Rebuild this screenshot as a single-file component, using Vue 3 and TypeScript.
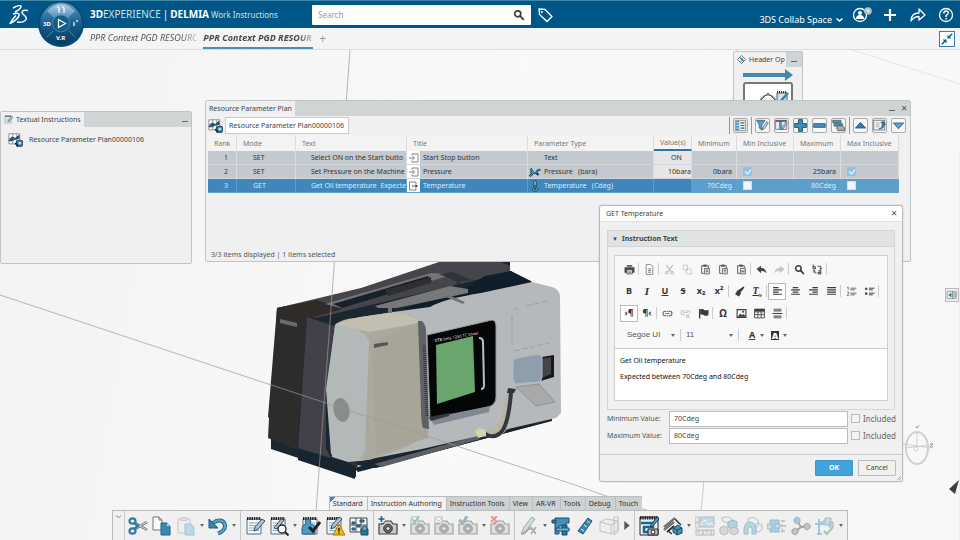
<script setup lang="ts">
import { ref } from 'vue'

interface Tool {
  kind: 'tool' | 'caret' | 'sep' | 'play'
  icon?: string
  label?: string
  dim?: boolean
}

interface Row {
  rank: number
  mode: string
  text: string
  dir: 'in' | 'out'
  title: string
  typeIcon: string
  type: string
  value: string
  min: string
  minInc: boolean | null
  max: string
  maxInc: boolean | null
}

const t = (icon: string, label: string, dim = false): Tool => ({ kind: 'tool', icon, label, dim })
const caret: Tool = { kind: 'caret' }
const sep: Tool = { kind: 'sep' }

const pad = '<path d="M2 3h14v15H2z" fill="#f4fafd" stroke="#666"/><path d="M2 2.5h14" stroke="#222" stroke-width="3" stroke-dasharray="1.4 .9"/><path d="M4 7h10M4 9.500h10M4 12h10M4 14.500h10" stroke="#7fb0cb" stroke-width="1"/>'
const cam = '<path d="M1 8h4l2-3h6l2 3h4v10H1z" fill="#c9cbcc" stroke="#3f4345" stroke-width="1.200"/><path d="M3 6h3v2H3z" fill="#555"/><circle cx="10" cy="12.500" r="4.300" fill="#6e7375" stroke="#2b2b2b"/><circle cx="10" cy="12.500" r="2" fill="#eee" stroke="#333"/>'

const art: Record<string, string> = {
  cut: '<path d="M7 7l12 7M7 13l12-7" stroke="#666" stroke-width="2.600"/><path d="M7 7l12 7M7 13l12-7" stroke="#e6e6e6" stroke-width="1"/><ellipse cx="4.500" cy="5" rx="3" ry="2.700" fill="none" stroke="#2f7ca3" stroke-width="2.200"/><ellipse cx="4.500" cy="15" rx="3" ry="2.700" fill="none" stroke="#2f7ca3" stroke-width="2.200"/><path d="M6 7l4 3-4 3" fill="none" stroke="#2f7ca3" stroke-width="2.400"/>',
  copy: '<path d="M1 1h6l3 3v10H1z" fill="#fafafa" stroke="#777"/><path d="M7 1v3h3" fill="none" stroke="#777"/><path d="M9 7h6l3 3v9H9z" fill="#3d88b0" stroke="#1d5f84"/><path d="M15 7v3h3z" fill="#b9dcee"/>',
  paste: '<path d="M2 3h12v14H2z" fill="#eee" stroke="#999"/><path d="M5 1.500h6v3H5z" fill="#ccc" stroke="#999"/><path d="M9 8h6l3 3v8H9z" fill="#7fbbd9" stroke="#4a90b5"/>',
  undo: '<path d="M5 7C11 2 17 5 17 10c0 4-3 6-7 7.500" fill="none" stroke="#1c5f86" stroke-width="4"/><path d="M5 7C11 2 17 5 17 10c0 4-3 6-7 7.500" fill="none" stroke="#5ca3c8" stroke-width="2.200"/><path d="M1 3v9h9z" fill="#3a86af" stroke="#1c5f86"/>',
  note: pad + '<path d="M9 15l1-4 7-8 3 2-7 8z" fill="#a9c3d2" stroke="#3c4f5b"/>',
  noteSearch: pad + '<path d="M5 12l7-9 3 1-7 9z" fill="#a9c3d2" stroke="#3c4f5b"/><circle cx="13" cy="13" r="4" fill="#fff" stroke="#222" stroke-width="1.300"/><path d="M16 16l3.500 3.500" stroke="#222" stroke-width="2"/>',
  noteCheck: pad + '<path d="M1 12q1-4 4-4l-1-3 3-2 3 2-1 3q5 0 5 5v5H1z" fill="#4d9ac3" stroke="#22688e"/><path d="M8 11l4 4 7-9" fill="none" stroke="#222" stroke-width="3"/>',
  noteWarn: pad + '<path d="M6 13l1-4 7-8 3 2-7 8z" fill="#a9c3d2" stroke="#3c4f5b"/><path d="M14 8l6 11H8z" fill="#f5b916" stroke="#a87400"/><path d="M14 12v3.500M14 16.500v1.300" stroke="#222" stroke-width="1.500"/>',
  plan: '<path d="M1 2h17v14H1z" fill="#f7f7f7" stroke="#444"/><path d="M7 2v14M12 2v14M1 9h17" stroke="#555"/><path d="M3 6h3v2H3zM11 4h4v2h-4zM3 12h3v2H3zM8 9h3v2H8z" fill="#4593bb" stroke="#174c6b"/><path d="M12 13h7v6h-7z" fill="#2d769f" stroke="#174c6b"/><circle cx="15.500" cy="12.500" r="2.500" fill="#5ca8cf" stroke="#174c6b"/>',
  camAdd: cam + '<path d="M3.500 0v7M0 3.500h7" stroke="#f1f1f1" stroke-width="4"/><path d="M3.500 0v6M.5 3h6" stroke="#14679b" stroke-width="1.600"/>',
  camOk: cam + '<path d="M1 1h7v6H1z" fill="#fff" stroke="#777"/><path d="M2 3l3 3 4-6" fill="none" stroke="#2d9d37" stroke-width="2"/>',
  camBox: cam + '<path d="M1 1h7v6H1z" fill="#fff" stroke="#777"/><path d="M2 3l3 2 4-4" fill="none" stroke="#999"/>',
  camPin: cam + '<path d="M1 4l4 3 4-7" fill="none" stroke="#3b6e8b" stroke-width="3"/>',
  camX: cam + '<path d="M1 0l6 6M7 0L1 6" stroke="#e32828" stroke-width="2"/>',
  fx: '<path d="M2 18l3-7L13 1l3 2-8 11z" fill="#a9c3d2" stroke="#3c5563"/><path d="M2 18q6 0 9-8M9 13h4M12 11l5 7M17 11l-5 7" fill="none" stroke="#444" stroke-width="1.300"/>',
  clamp: '<path d="M4 2h14v5h-3v3H8v8H4z" fill="#4290b8" stroke="#17506f"/><path d="M1 4h4v3H1zM11 9h5v10h-5z" fill="#2d769f" stroke="#17506f"/><path d="M5 12h13v3H5z" fill="#6db4d6" stroke="#17506f"/>',
  ruler: '<path d="M13 2l4 3-9 13-5-3z" fill="#3c87b2" stroke="#1c5273"/><path d="M12 5l3 2M9 9l3 2M6 13l3 2" stroke="#a9d3ea" stroke-width="1.200"/>',
  box: '<path d="M1 6l6-3 12 2v9l-7 4-11-3z" fill="#eaeaea" stroke="#888"/><path d="M1 6l11 3v9M12 9l7-4M15 1v18l4-3V1z" fill="none" stroke="#888"/>',
  seq: '<path d="M1 1h18v18H1z" fill="#e6f3fa" stroke="#222"/><path d="M1 2h18" stroke="#111" stroke-width="3" stroke-dasharray="1.500 .8"/><path d="M2 7h12v4H5v5h4" fill="none" stroke="#1c6790" stroke-width="2.500"/><path d="M11 10l7-9 2 2-7 8z" fill="#4d9ac3" stroke="#1d3c4f"/><path d="M9 13h10v6H9z" fill="#bbb" stroke="#222"/><circle cx="14" cy="16" r="2" fill="#fff" stroke="#222"/>',
  robot: '<path d="M1 11L12 2M1 14L11 6M4 16l7-6" stroke="#333" stroke-width="2"/><path d="M1 11L12 2M1 14L11 6" stroke="#ccc" stroke-width=".7"/><path d="M10 12l5-3 4 3v5l-5 2-4-3z" fill="#4593bb" stroke="#154763"/><path d="M10 12l4 2 5-2M14 14v5" fill="none" stroke="#154763"/><path d="M12 3l6 6M5 15l4 3" stroke="#333" stroke-width="1.500"/>',
  image: '<path d="M5 1h14v10H5z" fill="#8ec3df" stroke="#777"/><path d="M5 9l5-5 4 5 2-2 3 3" fill="none" stroke="#fff"/><path d="M0 1h4v5H0zM0 7h4v5H0z" fill="#e6e6e6" stroke="#888"/><path d="M1 14h18v5H1z" fill="#ddd" stroke="#777"/><path d="M4 14v3M8 14v5M12 14v3M16 14v5" stroke="#777"/>',
  parts: '<path d="M3 2q8-3 10 2l2 5-5 2-2-5q-5 1-5-4z" fill="#f1f1f1" stroke="#777"/><path d="M9 6l5-2 4 2v5l-5 2-4-2z" fill="#65afd3" stroke="#377795"/><path d="M1 12l4-2 4 2v5l-4 2-4-2zM11 13l4-2 4 2v4l-4 2-4-2z" fill="#bbb" stroke="#777"/>',
  arch: '<path d="M5 3l5-2 5 3v6l-5 2-5-2zM11 9l4-2 4 2v5l-4 2-4-2z" fill="#eee" stroke="#888"/><path d="M1 18v-6q1-6 6-6t6 6v6h-4v-6q-2-3-4 0v6z" fill="#6fb5d7" stroke="#39799a"/>',
  block: '<path d="M3 4h9v12H3z" fill="#5aa7ce" stroke="#34789b"/><path d="M0 8h5v5H0zM8 8h5v4H8z" fill="#99cbe3" stroke="#34789b"/><path d="M15 4v13" stroke="#777" stroke-dasharray="2 2"/><path d="M14 5h4M14 10h5M14 15h4" stroke="#777" stroke-width="1.500"/>',
  graph: '<path d="M6 5l4 6 6-1M10 11l-5 4" fill="none" stroke="#444" stroke-width="1.800"/><path d="M3 3l3-2 3 2v3L6 8 3 6z" fill="#4c9bc4" stroke="#31708f"/><path d="M1 14l3-2 3 2v3l-3 2-3-2zM13 9l3-2 3 2v3l-3 2-3-2z" fill="#8d8d8d" stroke="#444"/>',
  person: '<path d="M4 3v15M0 8h10M4 8l7-4M2 18h5" fill="none" stroke="#4594bd" stroke-width="2"/><path d="M10 2h6v7h-6zM14 6h4v5h-4z" fill="#8fc4dd" stroke="#557b8d"/><path d="M9 15l3 3 6-7" fill="none" stroke="#3ba03b" stroke-width="2"/>',

  // Table and panel glyphs
  resource: '<path d="M1 1h14v13H1z" fill="#fafafa" stroke="#777"/><path d="M6 1v13M11 1v9M1 7h14" stroke="#888"/><path d="M1 10l4-5 4 2 5-4v4l-5 1-4 2z" fill="#1f5d80" stroke="#173e54"/><path d="M11 10h7v7h-7z" fill="#2d769f" stroke="#14384c"/><circle cx="15" cy="13" r="4" fill="#4b92b7" stroke="#14384c"/><path d="M9 13l4 4" stroke="#222" stroke-width="2"/><circle cx="15" cy="13" r="1.500" fill="#d6ecf7"/>',
  list: '<path d="M2 2h16v16H2z" fill="#eef5f9" stroke="#555"/><path d="M3 3h5v14H3z" fill="#4b93b9"/><path d="M4 6h3M4 10h3M4 14h3" stroke="#fff" stroke-width="1.500"/><path d="M10 6h6M10 10h6M10 14h6" stroke="#555" stroke-width="1.800"/>',
  filter: '<path d="M1 2h13l-5 7v8l-4-3V9z" fill="#55a0c6" stroke="#1a5272"/><path d="M9 17l2-5 6-8 2 2-6 9z" fill="#b7d8e8" stroke="#30505f"/>',
  columns: '<path d="M1 2h17v14H1z" fill="#f4f4f4" stroke="#444"/><path d="M6 2h5v14H6z" fill="#4f9bc2"/><path d="M1 3h17" stroke="#666" stroke-width="3"/><path d="M10 17l2-5 5-8 2 2-6 9z" fill="#b7d8e8" stroke="#30505f"/>',
  add: '<path d="M7 1h6v6h6v6h-6v6H7v-6H1V7h6z" fill="#408db6" stroke="#164d6d" stroke-width="1.400"/>',
  remove: '<path d="M1 7h18v6H1z" fill="#408db6" stroke="#164d6d"/>',
  stack: '<path d="M1 2h13v4H1zM3 7h13v4H3z" fill="#4b96bc" stroke="#555"/><path d="M9 10h7l3 3v5H9l-2-4z" fill="#aaa" stroke="#333"/>',
  up: '<path d="M10 5l8 9H2z" fill="#2f7da8" stroke="#134866"/>',
  page: '<path d="M1 2h17v15H1z" fill="#f4f4f4" stroke="#444"/><path d="M4 6h6M4 9h6M4 12h6" stroke="#888"/><path d="M17 4l-5 1 2 2q1 7-5 8 8 1 8-7l2 1z" fill="#2d7eaa" stroke="#185374"/>',
  down: '<path d="M2 6h16l-8 9z" fill="#57a6cf" stroke="#134866"/>',
  pressure: '<path d="M1 17l6-5M2 10l5 2 5-1 3-4 4-1M3 4l4 8M11 11l5 4" fill="none" stroke="#163f56" stroke-width="3.600"/><path d="M1 17l6-5M2 10l5 2 5-1 3-4 4-1M3 4l4 8" fill="none" stroke="#5aa4c8" stroke-width="1.500"/>',
  thermo: '<path d="M8 2q2-2 4 0v10a4 4 0 1 1-4 0z" fill="#9bd0e8" stroke="#123e57" stroke-width="1.500"/><path d="M10 8v7" stroke="#15557b" stroke-width="2"/><circle cx="10" cy="15" r="2.500" fill="#15557b"/>',
  in: '<path d="M7 5V2h12v16H7v-3M1 10h10M8 6l4 4-4 4" fill="none" stroke="#777" stroke-width="1.800"/>',
  out: '<path d="M15 6V2H2v16h13v-4" fill="none" stroke="#777" stroke-width="1.800"/><path d="M7 10h9" stroke="#444" stroke-width="1.800"/><path d="M14 6l5 4-5 4z" fill="#444"/>',

  // Rich text editor glyphs
  print: '<path d="M5 2h10v3H5z" fill="#555"/><path d="M1 6h18v10H1z" fill="#444"/><path d="M5 10h10v8H5z" fill="#eee" stroke="#444" stroke-width="1.500"/><path d="M7 13h6M7 15.500h6" stroke="#444"/>',
  doc: '<path d="M4 1h8l4 4v14H4z" fill="#fff" stroke="#777" stroke-width="1.500"/><path d="M7 9h6M7 12h6M7 15h6" stroke="#666" stroke-width="1.500"/>',
  ecut: '<path d="M4 2l9 12M16 2L7 14" stroke="#bbb" stroke-width="2"/><circle cx="5" cy="16" r="2.300" fill="none" stroke="#bbb" stroke-width="2"/><circle cx="15" cy="16" r="2.300" fill="none" stroke="#bbb" stroke-width="2"/>',
  ecopy: '<path d="M2 2h8v9H2zM8 8h6l3 3v7H8z" fill="#f8f8f8" stroke="#c2c2c2" stroke-width="1.500"/>',
  epaste: '<path d="M3 3h12v5M3 3v14h4" fill="none" stroke="#555" stroke-width="1.700"/><path d="M6 1h6v4H6z" fill="#555"/><path d="M8 8h9v10H8z" fill="#eee" stroke="#555" stroke-width="1.500"/><path d="M10 11h5M10 14h5" stroke="#555" stroke-width="1.500"/>',
  epasteT: '<path d="M3 3h12v5M3 3v14h4" fill="none" stroke="#555" stroke-width="1.700"/><path d="M6 1h6v4H6z" fill="#555"/><path d="M8 8h9v10H8z" fill="#eee" stroke="#555" stroke-width="1.500"/><path d="M10 11h5M12.500 11v5" stroke="#555" stroke-width="1.500"/>',
  epasteW: '<path d="M3 3h12v5M3 3v14h4" fill="none" stroke="#555" stroke-width="1.700"/><path d="M6 1h6v4H6z" fill="#555"/><path d="M8 8h9v10H8z" fill="#eee" stroke="#555" stroke-width="1.500"/><path d="M10 11l1 4 1.500-3 1.500 3 1-4" fill="none" stroke="#555" stroke-width="1.300"/>',
  eundo: '<path d="M1 9l8-6v4q9 0 10 10-4-5-10-4v4z" fill="#444"/>',
  eredo: '<path d="M19 9l-8-6v4q-9 0-10 10 4-5 10-4v4z" fill="#c4c4c4"/>',
  find: '<circle cx="8" cy="8" r="5" fill="none" stroke="#3b3b3b" stroke-width="2.800"/><path d="M12 12l6 6" stroke="#3b3b3b" stroke-width="3"/>',
  replace: '<path d="M2 1v8M2 5h4v4H2M12 12h4v6h-5v-3h5" fill="none" stroke="#3b3b3b" stroke-width="1.800"/><path d="M10 4h6v5M14 7l2 3 2-3M8 16H4v-4M2 14l2-3 2 3" fill="none" stroke="#3b3b3b" stroke-width="1.500"/>',
  brush: '<path d="M18 2l-7 9-3-2z" fill="#3b3b3b" stroke="#3b3b3b" stroke-width="2.500"/><path d="M6 8l7 5-4 6-7-4z" fill="#3b3b3b"/>',
  alignL: '<path d="M2 3h10M2 7h16M2 11h10M2 15h16" stroke="#3b3b3b" stroke-width="2.200"/>',
  alignC: '<path d="M5 3h10M2 7h16M5 11h10M2 15h16" stroke="#3b3b3b" stroke-width="2.200"/>',
  alignR: '<path d="M8 3h10M2 7h16M8 11h10M2 15h16" stroke="#3b3b3b" stroke-width="2.200"/>',
  alignJ: '<path d="M2 3h16M2 7h16M2 11h16M2 15h16" stroke="#3b3b3b" stroke-width="2.200"/>',
  numbered: '<path d="M8 4h11M8 7h8M8 13h11M8 16h8" stroke="#666" stroke-width="1.800"/><path d="M2 3l2-1v5M2 11h3v2l-3 4h4" fill="none" stroke="#666" stroke-width="1.500"/>',
  bulleted: '<path d="M9 4h10M9 7h7M9 13h10M9 16h7" stroke="#3b3b3b" stroke-width="1.700"/><path d="M2 3h4v4H2zM2 12h4v4H2z" fill="#3b3b3b"/>',
  link: '<path d="M8 6H5q-3 0-3 4t3 4h3M12 6h3q3 0 3 4t-3 4h-3M6 10h8M9 6h2M9 14h2" fill="none" stroke="#777" stroke-width="2.200"/>',
  unlink: '<path d="M8 5H5q-3 0-3 3t3 4h4M11 5h4q3 0 3 4M6 8h8" fill="none" stroke="#c4c4c4" stroke-width="2"/><path d="M11 12l6 6M17 12l-6 6" stroke="#c4c4c4" stroke-width="2"/>',
  flag: '<path d="M3 2v17" stroke="#3b3b3b" stroke-width="2.500"/><path d="M4 2q5-1 7 1t8 0v10q-6 2-8 0t-7-1z" fill="#3b3b3b"/>',
  picture: '<path d="M2 3h16v14H2z" fill="none" stroke="#3b3b3b" stroke-width="2"/><path d="M3 16l5-6 3 3 3-2 4 5z" fill="#3b3b3b"/><circle cx="13" cy="7" r="1.800" fill="#3b3b3b"/>',
  table: '<path d="M1 2h18v16H1zM1 7h18M1 12h18M7 2v16M13 2v16" fill="none" stroke="#3b3b3b" stroke-width="1.500"/><path d="M1 2h18v4H1z" fill="#3b3b3b"/>',
  pagebreak: '<path d="M3 1h14v6H3zM3 13h14v6H3z" fill="#999"/><path d="M3 4h14M3 16h14" stroke="#666" stroke-width="1.500"/><path d="M1 10h18" stroke="#444" stroke-width="2"/>',
}

const bottomTools: Tool[] = [
  t('cut', 'Cut'), t('copy', 'Copy'), t('paste', 'Paste', true), caret, t('undo', 'Undo'), caret, sep,
  t('note', 'New note'), t('noteSearch', 'Find note'), caret, t('noteCheck', 'Sign off'), t('noteWarn', 'Alert'), t('plan', 'Parameter plan'), sep,
  t('camAdd', 'Add view'), caret, t('camOk', 'Apply view', true), t('camBox', 'Select view', true), t('camPin', 'Update view', true), caret, t('camX', 'Delete view', true), sep,
  t('fx', 'Formula', true), caret, t('clamp', 'Measure'), t('ruler', 'Measure between'), t('box', 'Section', true), { kind: 'play' }, sep,
  t('seq', 'Sequence'), t('robot', 'Resources'), caret, t('image', 'Capture', true), t('parts', 'Parts', true), t('arch', 'Assembly', true),
  t('block', 'Block', true), t('graph', 'Relations', true), t('person', 'Worker', true), caret,
]
const sections = ['Standard', 'Instruction Authoring', 'Instruction Tools', 'View', 'AR-VR', 'Tools', 'Debug', 'Touch']
const activeSection = ref(1)

const gridTools = ['|', 'list', '|', 'filter', 'columns', 'add', 'remove', 'stack', '|', 'up', 'page', 'down']

const heads = ['Rank', 'Mode', 'Text', 'Title', 'Parameter Type', 'Value(s)', 'Minimum', 'Min Inclusive', 'Maximum', 'Max Inclusive']
const rows = ref<Row[]>([
  { rank: 1, mode: 'SET', text: 'Select ON on the Start butto', dir: 'in', title: 'Start Stop button', typeIcon: '', type: 'Text', value: 'ON', min: '', minInc: null, max: '', maxInc: null },
  { rank: 2, mode: 'SET', text: 'Set Pressure on the Machine', dir: 'in', title: 'Pressure', typeIcon: 'pressure', type: 'Pressure   (bara)', value: '10bara', min: '0bara', minInc: true, max: '25bara', maxInc: true },
  { rank: 3, mode: 'GET', text: 'Get Oil temperature  Expecte', dir: 'out', title: 'Temperature', typeIcon: 'thermo', type: 'Temperature   (Cdeg)', value: '', min: '70Cdeg', minInc: false, max: '80Cdeg', maxInc: false },
])
const selected = ref(3)

const editorRows: string[][] = [
  ['print', '|', 'doc', '|', 'ecut', 'ecopy', 'epaste', 'epasteT', 'epasteW', '|', 'eundo', 'eredo', '|', 'find', 'replace', '|'],
  ['#B', '#I', '#U', '#S', '#x₂', '#x²', '|', 'brush', '#Tx', '|', 'alignL', 'alignC', 'alignR', 'alignJ', '|', 'numbered', 'bulleted', '|'],
  ['#›¶', '#¶‹', '|', 'link', 'unlink', 'flag', '|', '#Ω', 'picture', 'table', 'pagebreak', '|'],
]
const pressed = new Set(['alignL', '#›¶'])
const glyphClass: Record<string, string> = { '#I': 'it', '#U': 'un', '#S': 'st', '#Ω': 'omega' }

const instruction = ref('Get Oil temperature\nExpected between 70Cdeg and 80Cdeg')
const minimum = ref('70Cdeg')
const maximum = ref('80Cdeg')
</script>

<template>
  <div class="app">
    <header class="topbar">
      <svg class="ds" viewBox="0 0 20 20" aria-hidden="true">
        <path d="M4 3q8-4 8-1.500 0 2.500-6 5.500M4 9q7-2 6 1.500-1 4-9 8 2-4 6-8M19 5.500q-6-1-6 2 0 1 2.500 3 2.500 2 1.500 4-2 3.500-9 2.500" fill="none" stroke="#fff" stroke-width="1.500" stroke-linejoin="round" />
      </svg>
      <svg class="compass" viewBox="0 0 48 50" role="img" aria-label="Compass">
        <defs>
          <linearGradient id="cg" x1="0" y1="0" x2="0" y2="1"><stop offset="0" stop-color="#5d9ec2" /><stop offset=".5" stop-color="#155f8d" /><stop offset="1" stop-color="#07395f" /></linearGradient>
          <linearGradient id="cn" x1="0" y1="0" x2="0" y2="1"><stop offset="0" stop-color="#cfe4ef" stop-opacity=".75" /><stop offset="1" stop-color="#70aacb" stop-opacity=".55" /></linearGradient>
        </defs>
        <circle cx="24" cy="24" r="23" fill="#084a75" />
        <circle cx="24" cy="23.500" r="21" fill="url(#cg)" />
        <path d="M10 11q14-14 28 0L31 18q-7-5-14 0z" fill="url(#cn)" />
        <circle cx="24" cy="23.500" r="8.500" fill="#155d89" stroke="#5b9abe" stroke-width=".6" />
        <path d="M21.500 19.500l7 4-7 4z" fill="none" stroke="#fff" stroke-width="1.200" />
        <path d="M10 37l6-6M38 37l-6-6" stroke="#5b9abe" stroke-width=".8" />
        <path d="M20 7q3 0 2 4M25 7q3 0 2 4M22 8v5M27 8v5M37 22v4M40 20v2" stroke="#fff" fill="none" stroke-width="1.200" />
        <text x="6" y="26" font-size="6" font-weight="700" fill="#fff">3D</text>
        <text x="19" y="40" font-size="6" font-weight="700" fill="#fff">V.R</text>
      </svg>
      <h1 class="brand"><span><b>3D</b>EXPERIENCE</span><i>|</i><b>DELMIA</b><small>Work Instructions</small></h1>
      <form class="search" role="search" @submit.prevent>
        <input type="search" placeholder="Search" aria-label="Search" />
        <button type="submit" aria-label="Run search"><svg viewBox="0 0 20 20" v-html="art.find"></svg></button>
      </form>
      <button class="tag" aria-label="Tags">
        <svg viewBox="0 0 16 16"><path d="M2 2l6 .5 7 7-5 5-7.500-7z" fill="none" stroke="#fff" stroke-width="1.300" /><circle cx="4.800" cy="5" r="1" fill="#fff" /></svg>
      </button>
      <nav class="account">
        <button class="space">3DS Collab Space <svg viewBox="0 0 8 6"><path d="M1 1.500l3 2.500 3-2.500" fill="none" stroke="#fff" stroke-width="1.500" /></svg></button>
        <button aria-label="Profile">
          <svg class="ico" viewBox="0 0 20 16"><circle cx="8" cy="8" r="6.500" fill="none" stroke="#fff" stroke-width="1.300" /><circle cx="8" cy="6" r="2" fill="#fff" /><path d="M4 12q0-4 4-4t4 4z" fill="#fff" /><circle cx="16" cy="4" r="3.800" fill="#b9c0c4" /><circle cx="16" cy="4" r="1" fill="#fff" /></svg>
        </button>
        <button aria-label="Add"><svg class="ico" viewBox="0 0 20 16"><path d="M10 2v12M4 8h12" stroke="#fff" stroke-width="2.200" /></svg></button>
        <button aria-label="Share"><svg class="ico" viewBox="0 0 20 16"><path d="M3 14q0-8 8-8V2l6 6-6 5V9.500q-5 0-8 4.500z" fill="none" stroke="#fff" stroke-width="1.300" stroke-linejoin="round" /></svg></button>
        <button aria-label="Help"><svg class="ico" viewBox="0 0 20 16"><circle cx="10" cy="8" r="6.500" fill="none" stroke="#fff" stroke-width="1.300" /><path d="M7.800 6.500q0-2.500 2.300-2.500t2.200 2q0 1-2.200 2.500V10M10.100 11v1.500" fill="none" stroke="#fff" stroke-width="1.500" /></svg></button>
      </nav>
    </header>

    <nav class="tabs" aria-label="Dashboards">
      <a href="#one">PPR Context PGD RESOURC</a>
      <a href="#two" class="on"><span>PPR Context PGD RESOUR</span></a>
      <button class="plus" aria-label="New tab">+</button>
      <button class="shrink" aria-label="Exit full screen">
        <svg viewBox="0 0 16 16"><path d="M14 2l-4 4M2 14l4-4" stroke="#12608f" stroke-width="1.800" /><path d="M8.500 3v4.500H13zM7.500 13V8.500H3z" fill="#12608f" /></svg>
      </button>
    </nav>

    <main class="workspace">
      <svg class="scene" viewBox="0 50 960 490" preserveAspectRatio="xMidYMin meet" role="img" aria-label="Machine tool model">
        <g fill="none" stroke="#dedede" stroke-width=".7"><path d="M852 50l108 34M960 150v390" /><path d="M737 50l-4 50M704 480l-3 32" stroke="#b7b7b7" /></g>
        <path d="M277 308L500 262h10v9l21 10 28 75-9 65-174 47-20-3v12l-85-28v-12l-1-1z" fill="#1a2731" />
        <path d="M277 308l84-20 78-26h62l9 4v6L316 318z" fill="#45454b" />
        <path d="M277 308l40-8 25 9-34 10z" fill="#2e2b29" />
        <path d="M325 304l106-31 24 1-114 34z" fill="#747474" />
        <path d="M333 304l95-28 4 5-90 27z" fill="#17212a" />
        <path d="M385 290l46-13v6l-43 13z" fill="#302f30" />
        <path d="M439 274l14-2 19 8-14 2zM456 276h4v8h-4z" fill="#2d343b" />
        <path d="M485 276l26-5 21 11-55 17-60 12-15-2 55-16z" fill="#101e2b" />
        <path d="M277 308l30 9-10 133-29-12 1-20-1-1z" fill="#2d2c2b" />
        <path d="M307 317l27 9-8 65v57l5 10-33-10z" fill="#424149" />
        <path d="M298 449l58 18-1 12-57-19zM354 468l198-54v7l-194 51z" fill="#162530" />
        <path d="M374 464l103-28 3 3-98 28z" fill="#5c6064" />
        <path d="M327 435l5 19 26 14-1-5-25-11z" fill="#34302d" />
        <path d="M280 319l17 4v4l-17-4z" fill="#6a6a70" />
        <path d="M335 325q3-4 12-3l46-10 37-5q13-8 51-14l51-11 20 5q7 2 8 9l1 117-5 5-134 31-62 12-12 1-16-5-5-66z" fill="#b5b9bb" />
        <path d="M335 325l28 9 4 126-9 1-27-7-5-65z" fill="#b3b8b9" />
        <path d="M335 325q6-6 20-7l38-6q20 0 24 10l11 108q-12 14-29 20l-30 10-9-1 5-8 4-110q-5-14-34-16z" fill="#aba99d" />
        <path d="M335 325q8-5 25-8l35-5q19 2 24 11l-50 9q-10-3-34-7z" fill="#c3bfb0" />
        <path d="M372 342l4 112 52-16v-13l-7-104z" fill="#a7a598" />
        <path d="M374 344l14-2v3l-14 3z" fill="#54545b" />
        <path d="M375 306l75-20 18 3v4l-71 15h-19z" fill="#77787a" />
        <path d="M388 308h4v5h-4zM449 295l16 7-2 2-17-7z" fill="#727478" />
        <path d="M418 321h4q4 4 4 10l3 98-6-1q-2-5-2-20z" fill="#5e6265" />
        <path d="M424 345l3 72" stroke="#303b43" stroke-width="3" stroke-dasharray="1 1" />
        <path d="M427 335l65-15q4 0 4 7v70q0 8-8 10l-58 13z" fill="#050607" stroke="#999" />
        <path d="M430 418l60-12-1 6-55 13z" fill="#818892" />
        <path d="M429 417l21-4-1 3-18 5z" fill="#36363d" />
        <path d="M436 345l37-9 2 56-38 12z" fill="#6aa56e" />
        <text x="435" y="342" transform="rotate(-10 435 342)" font-size="4" fill="#ddd"><tspan font-weight="700">CTX</tspan> beta 1250 TC linear</text>
        <path d="M479 338q4 0 4 4l1 43q0 4-3 4" fill="none" stroke="#b8bfc3" stroke-width="2" />
        <path d="M513 310l7-3m6-1l21-5M512 315v32M514 351l35-8" fill="none" stroke="#898e91" stroke-width=".6" stroke-dasharray="6 2" />
        <path d="M542 357l12-2v22l-17 5z" fill="#15171b" />
        <path d="M542 359l9-2v17l-9 4z" fill="#46424e" />
        <path d="M513 362q0-4 4-4l22-4 3 3v20q0 4-4 5l-23 2-2-5z" fill="#8e9eac" stroke="#a9bdca" />
        <path d="M516 387l23-3 16 18-19 4z" fill="#aaa8a8" stroke="#85878a" stroke-width=".7" />
        <path d="M510 391v30q-4 16-18 17l-13-3 1-6q15 5 21-11l6-28z" fill="#b8b5a4" />
        <path d="M511 393q-3 36-12 41-7 5-15-1" fill="none" stroke="#343640" stroke-width="4" />
        <path d="M508 388l8 1-2 4h-7z" fill="#2d353e" />
        <path d="M475 431l4-3 7 2v6l-8 2z" fill="#d4d3a9" />
        <ellipse cx="341.500" cy="410" rx="8" ry="12" fill="#898b8d" transform="rotate(-12 341 410)" />
        <g fill="none" stroke="#999" stroke-width=".7"><path d="M0 295l250 83 325 107 77 27" /><path d="M350 50L316 512" /></g>
        <g fill="none" stroke="#d0d0d0"><ellipse cx="917" cy="448" rx="11" ry="16" stroke-width="2" /><path d="M903 444l28 4M917 432v18M905 448l25-3" /></g>
        <circle cx="916" cy="449" r="2" fill="#fff" stroke="#ccc" />
        <path d="M916 426l1 2 2-3M930 444h3l-3 3h3" fill="none" stroke="#777" stroke-width=".7" />
        <path d="M959 480l-10 9 6 5z" fill="#3f3f3f" />
      </svg>

      <section class="panel header-op">
        <div class="panel-head">
          <h2 class="ptab"><svg class="tiny" viewBox="0 0 10 10"><path d="M5 .5L9.500 5 5 9.500.5 5z" fill="#fff" stroke="#666" /><path d="M3 3l4 3M5 3l2 3-3 1" stroke="#277caa" fill="none" stroke-width="1.200" /></svg><span>Header Op</span></h2>
          <button class="win min" aria-label="Minimize header"></button>
        </div>
        <svg class="op-art" viewBox="0 0 54 34"><path d="M1 6h42V2l8 6-8 6v-4H1z" fill="#4289aa" /><rect x="2" y="16" width="48" height="30" rx="2" fill="#fff" stroke="#777" stroke-width="2" /><path d="M18 34q2-6 8-6t8 6M18 34l8-8 8 8" fill="none" stroke="#555" /><path d="M35 26h10v12H35z" fill="#cfe5f0" stroke="#555" /><path d="M35 25h10" stroke="#333" stroke-width="2" stroke-dasharray="1 1" /><path d="M37 36l9-10" stroke="#3781a8" stroke-width="2.500" /></svg>
      </section>

      <section class="panel textual">
        <div class="panel-head">
          <h2 class="ptab"><svg class="tiny" viewBox="0 0 20 20" v-html="art.note"></svg><span>Textual Instructions</span></h2>
          <button class="win min" aria-label="Minimize instructions"></button>
        </div>
        <a class="tree" href="#plan"><svg viewBox="0 0 19 18" v-html="art.resource"></svg>Resource Parameter Plan00000106</a>
      </section>

      <section class="panel plan">
        <div class="panel-head">
          <h2 class="ptab">Resource Parameter Plan</h2>
          <button class="win min" aria-label="Minimize plan"></button>
          <button class="win close" aria-label="Close plan">✕</button>
        </div>
        <div class="planbar">
          <svg viewBox="0 0 19 18" v-html="art.resource"></svg>
          <input value="Resource Parameter Plan00000106" aria-label="Plan name" />
          <div class="gridtools">
            <template v-for="(g, i) in gridTools" :key="i">
              <span v-if="g === '|'" class="bar"></span>
              <button v-else :aria-label="g"><svg viewBox="0 0 20 20" v-html="art[g]"></svg></button>
            </template>
          </div>
        </div>
        <table>
          <colgroup><col v-for="(h, i) in heads" :key="h" :class="'c' + i" /></colgroup>
          <thead>
            <tr><th v-for="(h, i) in heads" :key="h" :class="'h' + i" scope="col">{{ h }}</th></tr>
          </thead>
          <tbody>
            <tr v-for="r in rows" :key="r.rank" :class="{ sel: r.rank === selected }" @click="selected = r.rank">
              <td class="rank">{{ r.rank }}</td>
              <td class="mode">{{ r.mode }}</td>
              <td class="txt">{{ r.text }}</td>
              <td class="ttl"><div class="pair"><span class="dir"><svg viewBox="0 0 20 20" v-html="art[r.dir]"></svg></span>{{ r.title }}</div></td>
              <td class="typ"><div class="pair"><span class="tico"><svg v-if="r.typeIcon" viewBox="0 0 20 20" v-html="art[r.typeIcon]"></svg></span>{{ r.type }}</div></td>
              <td class="val">{{ r.value }}</td>
              <td class="lite num">{{ r.min }}</td>
              <td class="lite chk"><input v-if="r.minInc !== null" v-model="r.minInc" type="checkbox" :aria-label="'Minimum inclusive, row ' + r.rank" /></td>
              <td class="lite num">{{ r.max }}</td>
              <td class="lite chk"><input v-if="r.maxInc !== null" v-model="r.maxInc" type="checkbox" :aria-label="'Maximum inclusive, row ' + r.rank" /></td>
            </tr>
          </tbody>
        </table>
        <p class="status">3/3 items displayed | 1 items selected</p>
      </section>

      <section class="dialog" role="dialog" aria-labelledby="dlg">
        <div class="dlg-head">
          <h2 id="dlg">GET Temperature</h2>
          <button class="win close" aria-label="Close dialog">✕</button>
        </div>
        <div class="dlg-body">
          <div class="group">
            <h3><span>▼</span>Instruction Text</h3>
            <div class="editor">
              <div class="etools">
                <div v-for="(line, i) in editorRows" :key="i" class="eline">
                  <template v-for="(e, j) in line" :key="j">
                    <span v-if="e === '|'" class="esep"></span>
                    <button v-else-if="e === '#Tx'" aria-label="Remove format"><em class="tx">T<sub>x</sub></em></button>
                    <button v-else-if="e[0] === '#'" :class="[glyphClass[e], { down: pressed.has(e) }]">{{ e.slice(1) }}</button>
                    <button v-else :class="{ down: pressed.has(e) }" :aria-label="e"><svg viewBox="0 0 20 20" v-html="art[e]"></svg></button>
                  </template>
                </div>
                <div class="eline fonts">
                  <select class="fam" aria-label="Font"><option>Segoe UI</option></select><span class="drop"></span>
                  <span class="esep"></span>
                  <select class="size" aria-label="Font size"><option>11</option></select><span class="drop"></span>
                  <span class="esep"></span>
                  <button class="color" aria-label="Text color"><u>A</u></button><span class="drop"></span>
                  <button class="color back" aria-label="Background color"><b>A</b></button><span class="drop"></span>
                </div>
              </div>
              <textarea v-model="instruction" aria-label="Instruction text" rows="3" spellcheck="false"></textarea>
            </div>
          </div>
          <div class="field">
            <label for="min">Minimum Value:</label><input id="min" v-model="minimum" type="text" />
            <label class="inc"><input type="checkbox" />Included</label>
          </div>
          <div class="field">
            <label for="max">Maximum Value:</label><input id="max" v-model="maximum" type="text" />
            <label class="inc"><input type="checkbox" />Included</label>
          </div>
        </div>
        <div class="dlg-foot">
          <button class="ok">OK</button>
          <button class="cancel">Cancel</button>
          <svg class="grip" viewBox="0 0 4 4"><path d="M0 4l4-4M2 4l2-2" stroke="#999" stroke-width=".7" /></svg>
        </div>
      </section>

      <button class="edge" aria-label="Open side panel"><svg viewBox="0 0 20 20"><path d="M2 4h15v12H2z" fill="#eee" stroke="#777" /><path d="M11 4v12M12 7h5M12 10h5M12 13h5" stroke="#555" /><path d="M9 6v8l-5-4z" fill="#21739f" /></svg></button>

      <footer class="actionbar">
        <div class="sections" role="tablist">
          <button v-for="(s, i) in sections" :key="s" role="tab" :class="{ light: i < 2 }" :aria-selected="i === activeSection" @click="activeSection = i">{{ s }}</button>
        </div>
        <div class="tools">
          <button class="collapse" aria-label="Collapse"><svg viewBox="0 0 8 6"><path d="M1 1l3 2 3-2" fill="none" stroke="#777" /></svg></button>
          <template v-for="(b, i) in bottomTools" :key="i">
            <span v-if="b.kind === 'sep'" class="tsep"></span>
            <button v-else-if="b.kind === 'caret'" class="tcaret" aria-label="More"><span class="drop"></span></button>
            <button v-else-if="b.kind === 'play'" class="tplay" aria-label="Next"><svg viewBox="0 0 6 10"><path d="M0 0l6 5-6 5z" fill="#555" /></svg></button>
            <button v-else class="tool" :class="{ dim: b.dim }" :aria-label="b.label"><svg viewBox="0 0 20 20" v-html="art[b.icon!]"></svg></button>
          </template>
        </div>
      </footer>
    </main>
  </div>
</template>

<style>
body {
  margin: 0;
  background: #f8f8f8;
}
</style>

<style scoped>
.app {
  display: flex;
  flex-direction: column;
  min-height: 100vh;
  overflow: hidden;
  color: #444;
  font: 7px/10px "Noto Sans", "Open Sans", sans-serif;
}
.app * {
  box-sizing: border-box;
}
button, input, select, textarea {
  margin: 0;
  padding: 0;
  border: 0;
  background: none;
  color: inherit;
  font: inherit;
}
h1, h2, h3, p {
  margin: 0;
  font: inherit;
}
a {
  color: inherit;
  text-decoration: none;
}
svg {
  display: block;
  flex: none;
}

/* Top bar */
.topbar {
  position: relative;
  z-index: 3;
  display: flex;
  align-items: center;
  height: 28px;
  padding-right: 4px;
  background: #005686;
  border-top: 1px solid #3f86ab;
  color: #fff;
}
.ds {
  width: 22px;
  height: 20px;
  margin-left: 8px;
}
.compass {
  position: absolute;
  left: 37px;
  top: -1px;
  width: 48px;
  height: 50px;
}
.brand {
  display: flex;
  align-items: baseline;
  gap: 2px;
  width: 222px;
  margin-left: 60px;
  font-size: 10px;
  line-height: 14px;
  white-space: nowrap;
  color: #cfe2ec;
}
.brand b {
  color: #fff;
}
.brand i {
  font-style: normal;
  color: #fff;
}
.brand small {
  font-size: 8px;
}
.search {
  display: flex;
  align-items: center;
  width: 219px;
  height: 20px;
  padding: 0 6px;
  background: #fff;
  border-radius: 1px;
}
.search input {
  flex: 1;
  min-width: 0;
  font-size: 8px;
  color: #444;
  outline: none;
}
.search input::placeholder {
  color: #999;
}
.search svg {
  width: 12px;
  height: 12px;
}
.tag {
  margin-left: 6px;
}
.tag svg {
  width: 16px;
  height: 16px;
}
.account {
  display: flex;
  align-items: center;
  gap: 8px;
  margin-left: auto;
}
.space {
  display: flex;
  align-items: center;
  gap: 3px;
  padding-top: 10px;
  font-size: 9px;
}
.space svg {
  width: 9px;
  height: 6px;
}
.ico {
  width: 20px;
  height: 16px;
}

/* Dashboard tabs */
.tabs {
  display: flex;
  align-items: center;
  gap: 6px;
  height: 22px;
  padding: 0 5px 0 90px;
  background: #f3f4f6;
  border-bottom: 1px solid #ddd;
  font-size: 9px;
  font-style: italic;
  color: #555;
}
.tabs a {
  min-width: 106px;
  height: 21px;
  line-height: 20px;
  white-space: nowrap;
  mask-image: linear-gradient(to right, #000 85%, transparent 105%);
}
.tabs a.on {
  min-width: 110px;
  font-weight: 700;
  mask-image: none;
  border-bottom: 2px solid #4690be;
}
.tabs .on span {
  background: linear-gradient(to right, #444 88%, #ccc);
  background-clip: text;
  color: transparent;
}
.plus {
  font-size: 12px;
  font-style: normal;
  color: #999;
}
.shrink {
  margin-left: auto;
  border: 1px solid #3c7fa6;
  background: #fff;
}
.shrink svg {
  width: 14px;
  height: 14px;
}

/* Workspace */
.workspace {
  position: relative;
  display: flex;
  flex: 1;
  background: linear-gradient(100deg, #f3f3f3, #f9f9f9 50%, #f8f8f8);
}
.scene {
  position: absolute;
  inset: 0;
  width: 100%;
  height: 100%;
}
.panel {
  position: absolute;
  display: flex;
  flex-direction: column;
  background: #f0f0f0;
  border: 1px solid #bfc4c6;
  border-radius: 2px;
}
.panel-head {
  display: flex;
  align-items: center;
  height: 15px;
  background: #d0d4d4;
}
.ptab {
  display: flex;
  align-items: center;
  gap: 3px;
  height: 15px;
  margin-right: auto;
  padding: 0 3px;
  background: #f0f0f0;
  white-space: nowrap;
}
.tiny {
  width: 9px;
  height: 9px;
}
.win {
  display: grid;
  place-items: center;
  width: 12px;
  height: 14px;
  color: #555;
}
.min::before {
  content: "";
  width: 6px;
  height: 1px;
  margin-top: 4px;
  background: #666;
}
.close {
  font: 8px/12px "DejaVu Sans", sans-serif;
}
.header-op {
  left: 733px;
  top: 1px;
  width: 70px;
  height: 60px;
}
.header-op .win {
  width: 16px;
}
.header-op .ptab {
  width: 52px;
}
.op-art {
  width: 54px;
  height: 34px;
  margin: 0 8px;
}
.textual {
  left: 0;
  top: 61px;
  width: 192px;
  height: 153px;
}
.tree {
  display: flex;
  align-items: center;
  gap: 6px;
  padding: 6px 7px;
}
.tree svg, .planbar > svg {
  width: 15px;
  height: 14px;
}
.plan {
  left: 205px;
  right: 49px;
  top: 50px;
  height: 162px;
}
.planbar {
  display: flex;
  align-items: center;
  gap: 2px;
  height: 19px;
  padding-left: 2px;
}
.planbar > input {
  width: 124px;
  height: 17px;
  padding: 0 3px;
  background: #fff;
  border: 1px solid #ccc;
}
.gridtools {
  display: flex;
  align-items: center;
  gap: 4px;
  margin-left: auto;
  padding-right: 4px;
}
.gridtools .bar {
  width: 1px;
  height: 17px;
  margin: 0 -1px;
  background: #999;
}
.gridtools button {
  display: grid;
  place-items: center;
  width: 15px;
  height: 15px;
  background: #f7f7f7;
  border: 1px solid #aaa;
  border-radius: 2px;
}
.gridtools svg {
  width: 13px;
  height: 13px;
}
table {
  width: calc(100% - 13px);
  margin: 0 11px 0 2px;
  table-layout: fixed;
  border-collapse: separate;
  border-spacing: 0;
}
.c0 { width: 29px; }
.c1 { width: 59px; }
.c2 { width: 111px; }
.c3 { width: 121px; }
.c4 { width: 126px; }
.c5 { width: 38px; }
.c6 { width: 45px; }
.c7 { width: 57px; }
.c8 { width: 47px; }
.c9 { width: 58px; }
th, td {
  height: 14px;
  padding: 0 6px;
  border-right: 1px solid #dadcde;
  text-align: left;
  font-weight: 400;
  line-height: 13px;
  white-space: nowrap;
}
th {
  height: 16px;
  background: #f3f3f3;
  color: #777;
}
.h5 {
  border-bottom: 2px solid #2a78a8;
}
td {
  background: #c4c9cf;
  border-bottom: 1px solid #d4d7da;
  color: #333;
  white-space: pre;
}
.rank, .mode {
  padding-left: 16px;
}
.txt {
  padding: 0 0 0 15px;
}
.ttl, .typ {
  padding: 0;
}
.pair {
  display: flex;
  align-items: center;
  gap: 3px;
  height: 13px;
}
.dir {
  display: grid;
  place-items: center;
  width: 13px;
  height: 13px;
  background: #fff;
}
.dir svg {
  width: 11px;
  height: 10px;
}
.tico {
  display: grid;
  place-items: center;
  width: 13px;
}
.tico svg {
  width: 12px;
  height: 12px;
}
.val {
  padding: 0;
  background: #e6e6e6;
  text-align: right;
}
tr:first-child .val {
  padding-left: 8px;
  text-align: center;
}
.num {
  padding: 0 4px;
  text-align: right;
}
.sel td {
  background: #3f87ba;
  border-color: #5f9fca;
  color: #dcecf6;
}
.sel .lite {
  background: #5c9fcd;
}
.chk input {
  display: block;
  width: 9px;
  height: 9px;
}
input[type="checkbox"] {
  position: relative;
  appearance: none;
  background: #f4f4f4;
  border: 1px solid #ddd;
}
input[type="checkbox"]:checked {
  background: #8ec5e5;
  border-color: #8ec5e5;
}
input[type="checkbox"]:checked::after {
  content: "";
  position: absolute;
  left: 2px;
  top: 0;
  width: 3px;
  height: 5px;
  border: solid #fff;
  border-width: 0 1px 1px 0;
  transform: rotate(40deg);
}
.status {
  margin-top: auto;
  padding: 1px 5px;
  color: #555;
}

/* Dialog */
.dialog {
  position: absolute;
  z-index: 2;
  left: 599px;
  top: 155px;
  width: 304px;
  background: #f0f0f0;
  border: 1px solid #bbb;
  border-radius: 3px;
  box-shadow: 0 0 2px #0003;
}
.dlg-head {
  display: flex;
  align-items: center;
  justify-content: space-between;
  height: 16px;
  padding: 0 2px 0 6px;
  background: #fff;
  border-bottom: 1px solid #ddd;
  border-radius: 3px 3px 0 0;
}
.dlg-body {
  padding: 8px 7px 10px;
}
.group {
  padding-bottom: 8px;
  border: 1px solid #d5d5d5;
}
.group h3 {
  display: flex;
  align-items: center;
  gap: 4px;
  height: 16px;
  padding-left: 4px;
  background: #e0e3e2;
  border-bottom: 1px solid #d2d5d5;
  font-weight: 700;
}
.group h3 span {
  font-size: 6px;
}
.editor {
  margin: 8px 6px 0;
  border: 1px solid #d0d0d0;
}
.etools {
  padding: 2px 5px;
  background: #f8f8f8;
  border-bottom: 1px solid #ccc;
}
.eline {
  display: flex;
  align-items: center;
  height: 22px;
}
.eline button {
  display: grid;
  place-items: center;
  width: 18px;
  height: 17px;
  border: 1px solid transparent;
  color: #333;
  font: 700 9px/12px "Noto Sans", sans-serif;
}
.eline .down {
  background: #fff;
  border-color: #bbb;
}
.eline svg {
  width: 11px;
  height: 11px;
}
.eline .it {
  font: italic 700 11px/12px "Liberation Serif", serif;
}
.eline .un {
  text-decoration: underline;
}
.eline .st {
  text-decoration: line-through;
}
.eline .omega {
  font-size: 10px;
}
.tx {
  font: italic 700 10px/12px "Liberation Serif", serif;
  text-decoration: underline;
}
.tx sub {
  font-size: 6px;
  line-height: 0;
}
.esep {
  width: 1px;
  height: 12px;
  margin-right: 1px;
  background: #ccc;
}
.fonts {
  font: 8px/12px "Liberation Sans", sans-serif;
  color: #555;
}
.fonts .esep {
  margin: 0 5px;
}
.fonts select {
  appearance: none;
  outline: none;
}
.fam {
  width: 44px;
  margin-left: 7px;
}
.size {
  width: 43px;
}
.drop {
  width: 0;
  height: 0;
  border: 2px solid transparent;
  border-top: 3px solid #666;
  border-bottom: 0;
}
.eline .color {
  width: 16px;
}
.eline .back {
  margin-left: 3px;
}
.back b {
  padding: 0 1px;
  line-height: 9px;
  background: #333;
  color: #fff;
}
textarea {
  display: block;
  width: 100%;
  height: 51px;
  padding: 4px 5px;
  background: #fff;
  color: #111;
  line-height: 16px;
  resize: none;
  outline: none;
}
.field {
  display: flex;
  align-items: center;
  height: 17px;
}
.field > label:first-child {
  width: 62px;
  color: #555;
}
.field > input {
  flex: 1;
  min-width: 0;
  height: 16px;
  padding: 0 4px;
  background: #fff;
  border: 1px solid #bbb;
}
.inc {
  display: flex;
  align-items: center;
  gap: 3px;
  width: 47px;
  padding-left: 3px;
  font-size: 8px;
  color: #666;
  white-space: nowrap;
}
.inc input {
  flex: none;
  width: 9px;
  height: 9px;
  border-color: #bbb;
}
.dlg-foot {
  position: relative;
  display: flex;
  justify-content: flex-end;
  gap: 5px;
  padding: 5px 6px;
  border-top: 1px solid #ccc;
}
.dlg-foot button {
  width: 38px;
  height: 16px;
  border: 1px solid #bbb;
  border-radius: 1px;
}
.dlg-foot .ok {
  background: #42a2da;
  border-color: #3b97cd;
  color: #fff;
  font-weight: 700;
}
.grip {
  position: absolute;
  right: 1px;
  bottom: 1px;
  width: 4px;
  height: 4px;
}
.edge {
  position: absolute;
  right: 1px;
  top: 238px;
  border: 1px solid #bbb;
  background: #eee;
}
.edge svg {
  width: 12px;
  height: 12px;
}

/* Action bar */
.actionbar {
  position: relative;
  display: flex;
  flex-direction: column;
  align-items: center;
  margin: auto auto 0;
}
.sections {
  display: flex;
  margin-left: 11px;
}
.sections button {
  height: 14px;
  padding: 0 4px 0 3px;
  background: #cdd1d2;
  border: 1px solid #b9bec0;
  border-width: 1px 0 0 1px;
  color: #333;
}
.sections .light {
  background: #f1f1f1;
}
.sections button:first-child {
  background: linear-gradient(135deg, #3b87bd 4px, #f1f1f1 4px);
}
.tools {
  display: flex;
  align-items: center;
  height: 30px;
  padding-right: 2px;
  background: #f0f0f0;
  border: 1px solid #b9bdbf;
  border-bottom: 0;
}
.collapse {
  align-self: stretch;
  width: 12px;
  margin-right: 1px;
  padding: 4px 2px;
  border-right: 1px solid #ccc;
}
.collapse svg {
  width: 7px;
  height: 5px;
  margin-bottom: 16px;
}
.tool {
  display: grid;
  place-items: center;
  width: 24px;
  height: 24px;
}
.tool svg {
  width: 20px;
  height: 20px;
}
.dim {
  opacity: .45;
}
.tcaret {
  display: grid;
  place-items: center;
  width: 8px;
  height: 20px;
}
.tplay {
  width: 11px;
  padding-left: 3px;
}
.tplay svg {
  width: 6px;
  height: 9px;
}
.tsep {
  align-self: stretch;
  width: 1px;
  margin: 0 2px;
  background: #c4c7c9;
}
</style>
